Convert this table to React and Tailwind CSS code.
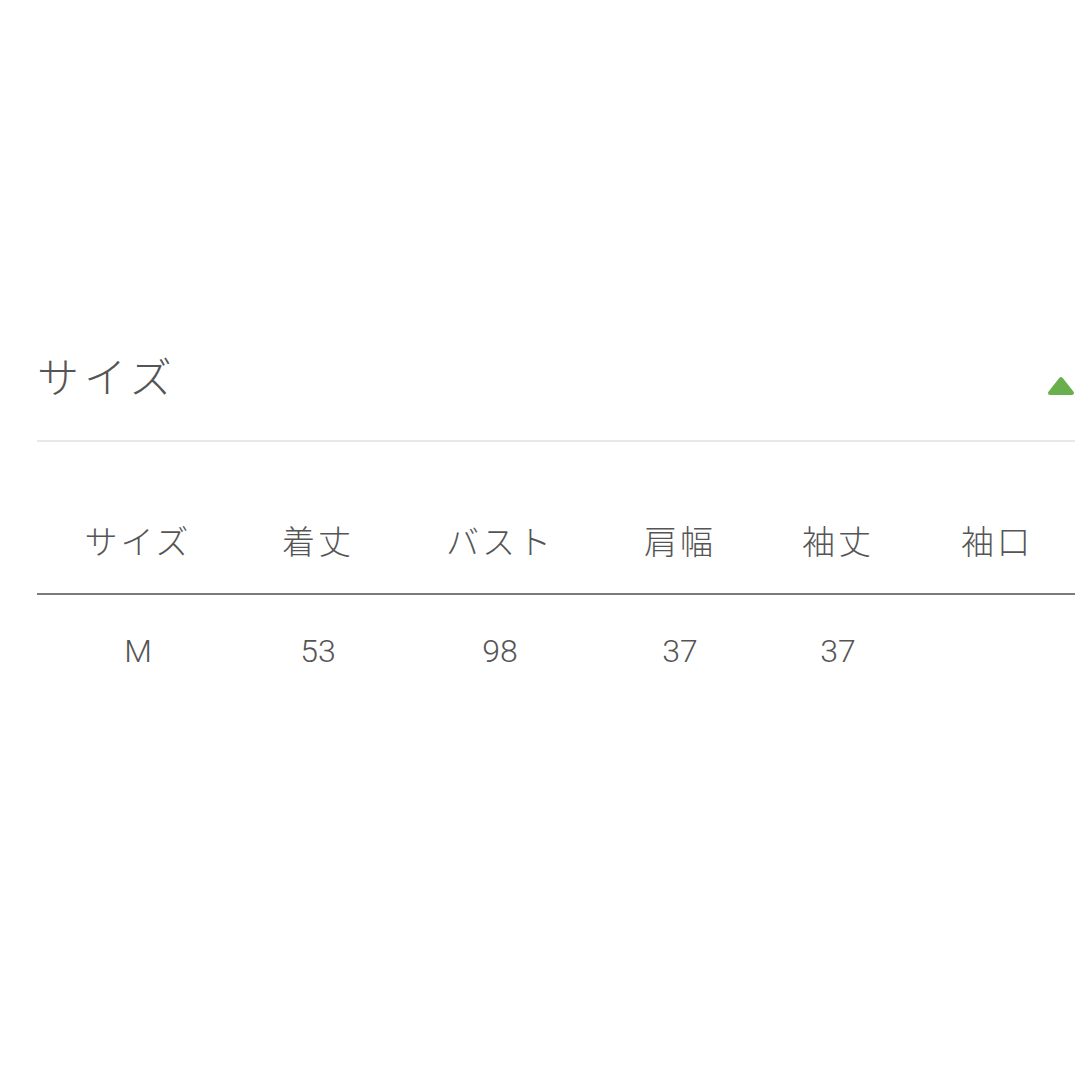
export default function App() {
  const cols = [
    { h: "サイズ", v: "M", w: "w-[202px]" },
    { h: "着丈", v: "53", w: "w-[158px]" },
    { h: "バスト", v: "98", w: "w-[206px]" },
    { h: "肩幅", v: "37", w: "w-[154px]" },
    { h: "袖丈", v: "37", w: "w-[162px]" },
    { h: "袖口", v: "", w: "flex-1" },
  ];
  return (
    <div
      className="w-[1080px] h-[1080px] bg-white pl-[37px] pr-[5px] pt-[345px] text-[#555]"
      style={{ fontFamily: '"Noto Sans CJK JP", "Noto Sans", sans-serif' }}
    >
      <div className="flex h-[60px] items-center justify-between">
        <div className="text-[42px] leading-none tracking-[5px] font-light">サイズ</div>
        <svg width="28" height="20" viewBox="0 0 28 20" className="mt-[22px]">
          <path
            d="M14 3 L25 17 L3 17 Z"
            fill="#6aaf4d"
            stroke="#6aaf4d"
            strokeWidth="4"
            strokeLinejoin="round"
          />
        </svg>
      </div>
      <div className="mt-[35px] h-[2px] bg-[#e8e8e8]" />
      <div className="mt-[58px] flex border-b-2 border-[#7b7b7b]">
        {cols.map((c, i) => (
          <div
            key={i}
            className={`${c.w} h-[93px] flex items-start justify-center pt-[24px] text-[33px] leading-none tracking-[3px] font-light`}
          >
            {c.h}
          </div>
        ))}
      </div>
      <div className="flex">
        {cols.map((c, i) => (
          <div
            key={i}
            className={`${c.w} h-[112px] flex items-center justify-center text-[32px] leading-none font-light`}
            style={{ fontFamily: 'Roboto, "Noto Sans CJK JP", sans-serif' }}
          >
            {c.v}
          </div>
        ))}
      </div>
    </div>
  );
}
